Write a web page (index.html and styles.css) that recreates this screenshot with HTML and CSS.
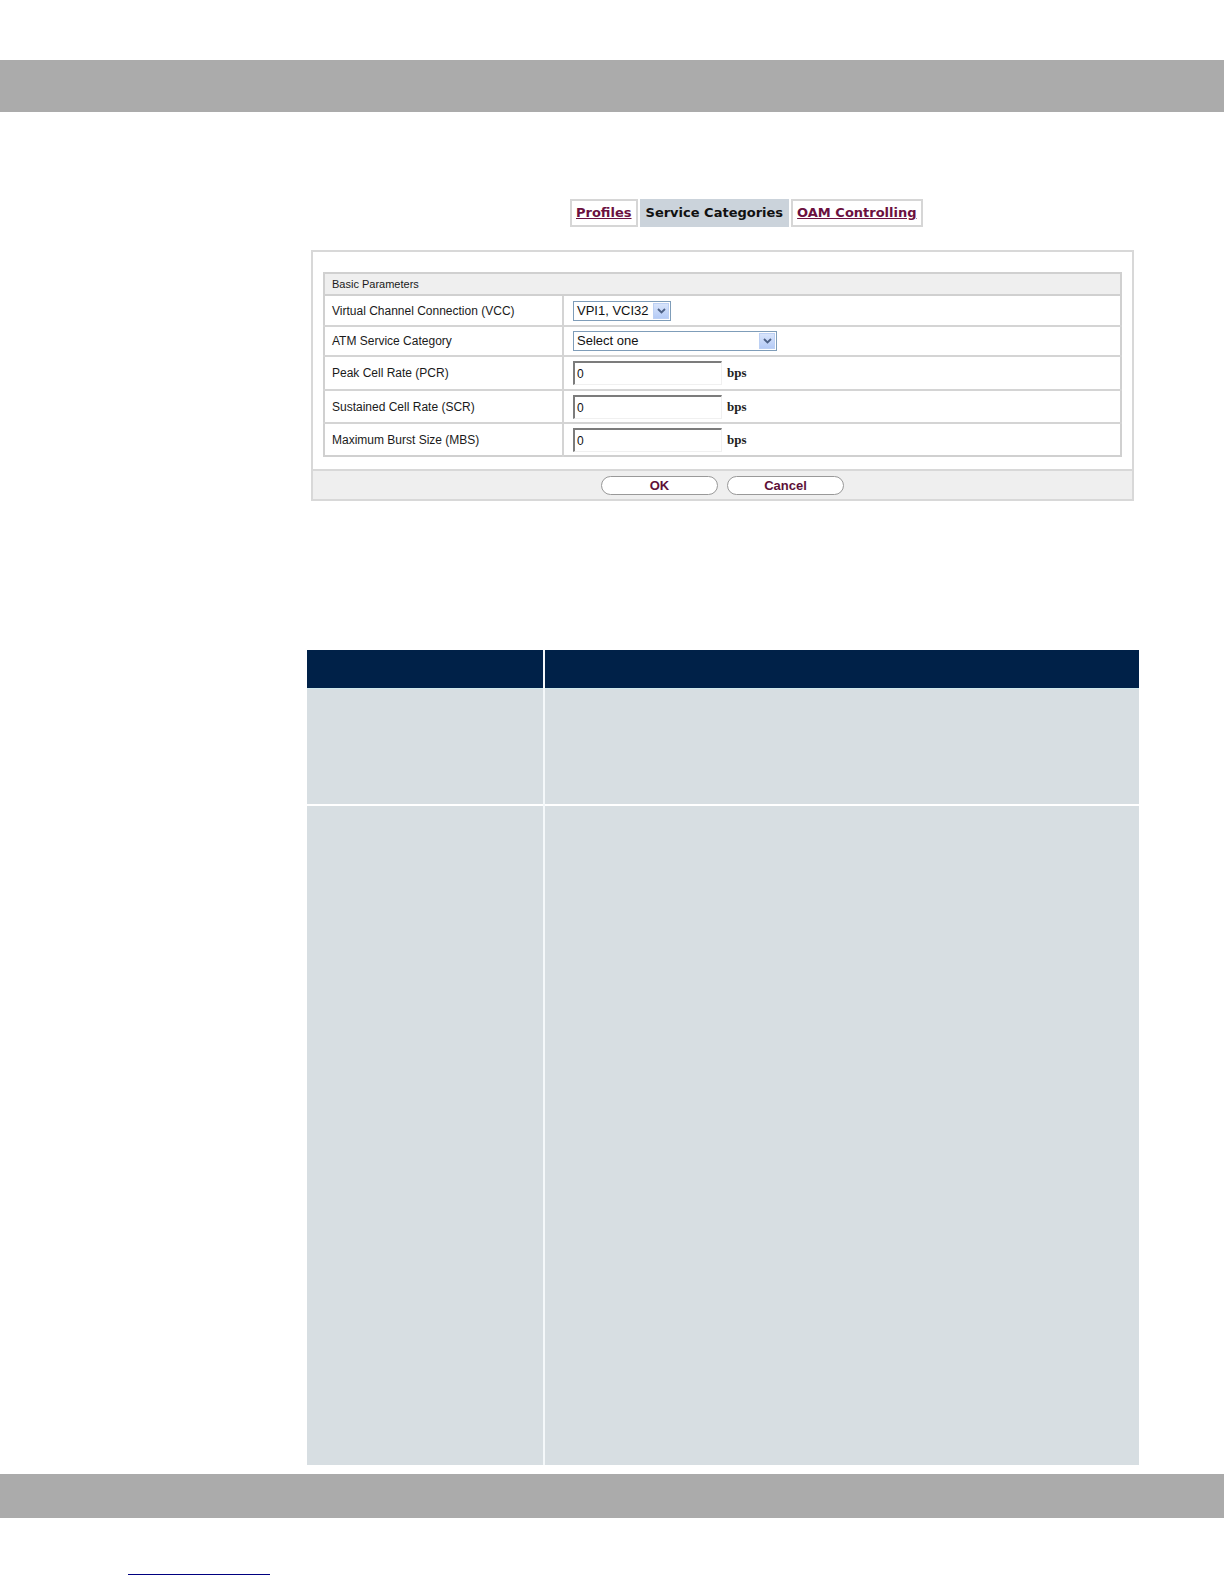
FILE: index.html
```html
<html lang="en">
<head>
    <meta charset="UTF-8">
    <title>ATM - Service Categories</title>
<link rel="stylesheet" href="styles.css">
</head>
<body>
    <div class="topbar"></div>

    <div class="tabs">
        <a class="tab" href="#">Profiles</a>
        <span class="tab active">Service Categories</span>
        <a class="tab" href="#">OAM Controlling</a>
    </div>

    <div class="panel">
        <div class="panel-body">
            <table class="form">
                <tr>
                    <th colspan="2">Basic Parameters</th>
                </tr>
                <tr class="r1">
                    <td class="label">Virtual Channel Connection (VCC)</td>
                    <td>
                        <div class="select small">
                            <span class="sel-text">VPI1, VCI32</span>
                            <span class="sel-btn"><svg width="9" height="6" viewBox="0 0 9 6"><path d="M1 1 L4.5 4.5 L8 1" fill="none" stroke="#4d6185" stroke-width="1.8"/></svg></span>
                        </div>
                    </td>
                </tr>
                <tr class="r2">
                    <td class="label">ATM Service Category</td>
                    <td>
                        <div class="select wide">
                            <span class="sel-text">Select one</span>
                            <span class="sel-btn"><svg width="9" height="6" viewBox="0 0 9 6"><path d="M1 1 L4.5 4.5 L8 1" fill="none" stroke="#4d6185" stroke-width="1.8"/></svg></span>
                        </div>
                    </td>
                </tr>
                <tr class="r3 first">
                    <td class="label">Peak Cell Rate (PCR)</td>
                    <td><input type="text" value="0"><span class="unit">bps</span></td>
                </tr>
                <tr class="r3">
                    <td class="label">Sustained Cell Rate (SCR)</td>
                    <td><input type="text" value="0"><span class="unit">bps</span></td>
                </tr>
                <tr class="r3">
                    <td class="label">Maximum Burst Size (MBS)</td>
                    <td><input type="text" value="0"><span class="unit">bps</span></td>
                </tr>
            </table>
        </div>
        <div class="actions">
            <button>OK</button>
            <button>Cancel</button>
        </div>
    </div>

    <table class="info">
        <thead>
            <tr>
                <th class="c1"></th>
                <th class="c2"></th>
            </tr>
        </thead>
        <tbody>
            <tr class="row-a">
                <td class="c1"></td>
                <td class="c2"></td>
            </tr>
            <tr class="row-b">
                <td class="c1"></td>
                <td class="c2"></td>
            </tr>
        </tbody>
    </table>

    <div class="bottombar"></div>

    <div class="footer">
        <a class="footer-link" href="#">&nbsp;</a>
    </div>
</body>
</html>
```

FILE: styles.css
```css
body {
    margin: 0;
    padding: 0;
    background-color: #ffffff;
    font-family: "Liberation Sans", Arial, sans-serif;
}
.topbar {
    margin-top: 60px;
    height: 52px;
    background-color: #ababab;
}
.tabs {
    display: flex;
    gap: 2px;
    margin: 87px 0 0 570px;
    height: 28px;
}
.tab {
    display: block;
    box-sizing: border-box;
    height: 28px;
    line-height: 24px;
    padding: 0 4px;
    border: 2px solid #d6d6d6;
    background-color: #ffffff;
    font-family: "DejaVu Sans", Verdana, sans-serif;
    font-weight: bold;
    font-size: 13px;
    color: #6b1040;
}
.tab.active {
    background-color: #cbd3db;
    border-color: #cbd3db;
    color: #111111;
    text-decoration: none;
}
.panel {
    margin: 23px 0 0 311px;
    width: 823px;
    box-sizing: border-box;
    border: 2px solid #d8d8d8;
}
.panel-body {
    padding: 20px 10px 12px 10px;
}
table.form {
    width: 799px;
    border-collapse: collapse;
    border: 2px solid #d0d0d0;
    font-size: 12px;
    color: #1a1a1a;
}
table.form th {
    height: 22px;
    padding: 0 0 0 7px;
    text-align: left;
    font-weight: normal;
    font-size: 11px;
    background-color: #efefef;
    border-bottom: 2px solid #d0d0d0;
}
table.form td {
    padding: 0 0 0 7px;
    border-top: 2px solid #d4d4d4;
    vertical-align: middle;
}
table.form td.label {
    width: 230px;
    border-right: 2px solid #d4d4d4;
}
table.form tr.r1 td {
    height: 31px;
}
table.form tr.r2 td {
    height: 30px;
}
table.form tr.r3 td {
    height: 33px;
}
table.form tr.r3.first td {
    height: 34px;
}
.select {
    display: inline-flex;
    box-sizing: border-box;
    height: 20px;
    border: 1px solid #7f9db9;
    background-color: #ffffff;
    vertical-align: middle;
    margin-left: 2px;
}
.select.small {
    width: 98px;
}
.select.wide {
    width: 204px;
}
.sel-text {
    flex: 1;
    padding-left: 3px;
    font-size: 13px;
    line-height: 18px;
    color: #111111;
}
.sel-btn {
    display: flex;
    align-items: center;
    justify-content: center;
    width: 16px;
    margin: 1px;
    background: linear-gradient(#d8e4fb, #b5cbf6);
    border: 1px solid #bcd0f4;
    box-sizing: border-box;
}
input {
    box-sizing: border-box;
    width: 149px;
    height: 24px;
    margin: 0 5px 0 2px;
    padding: 1px 2px 0 2px;
    border-top: 2px solid #7c7c7c;
    border-left: 2px solid #7c7c7c;
    border-right: 1px solid #f0f0f0;
    border-bottom: 1px solid #f0f0f0;
    font-family: "Liberation Sans", Arial, sans-serif;
    font-size: 12px;
    color: #111111;
    vertical-align: middle;
}
.unit {
    font-family: "Liberation Serif", "Times New Roman", serif;
    font-weight: bold;
    font-size: 13px;
    color: #222222;
    vertical-align: middle;
}
.actions {
    display: flex;
    justify-content: center;
    align-items: center;
    gap: 9px;
    height: 28px;
    border-top: 2px solid #d8d8d8;
    background-color: #efefef;
}
button {
    width: 117px;
    height: 19px;
    padding: 0;
    border: 1px solid #999999;
    border-radius: 10px;
    background-color: #ffffff;
    font-family: "Liberation Sans", Arial, sans-serif;
    font-weight: bold;
    font-size: 13px;
    color: #5e1038;
    cursor: pointer;
}
table.info {
    margin: 149px 0 0 307px;
    width: 832px;
    border-collapse: collapse;
}
table.info th {
    height: 38px;
    padding: 0;
    background-color: #002148;
    border-bottom: 1px solid #cfe8ec;
}
table.info td {
    padding: 0;
    background-color: #d7dee2;
}
table.info .c1 {
    width: 236px;
}
table.info .c2 {
    border-left: 2px solid #f4f8fa;
}
table.info tr.row-a td {
    height: 117px;
}
table.info tr.row-b td {
    height: 660px;
    border-top: 2px solid #ffffff;
}
.bottombar {
    margin-top: 9px;
    height: 44px;
    background-color: #ababab;
}
.footer {
    padding: 40px 0 0 128px;
}
.footer-link {
    display: inline-block;
    width: 142px;
    height: 16px;
    border-bottom: 1px solid #000080;
    text-decoration: none;
}
```
